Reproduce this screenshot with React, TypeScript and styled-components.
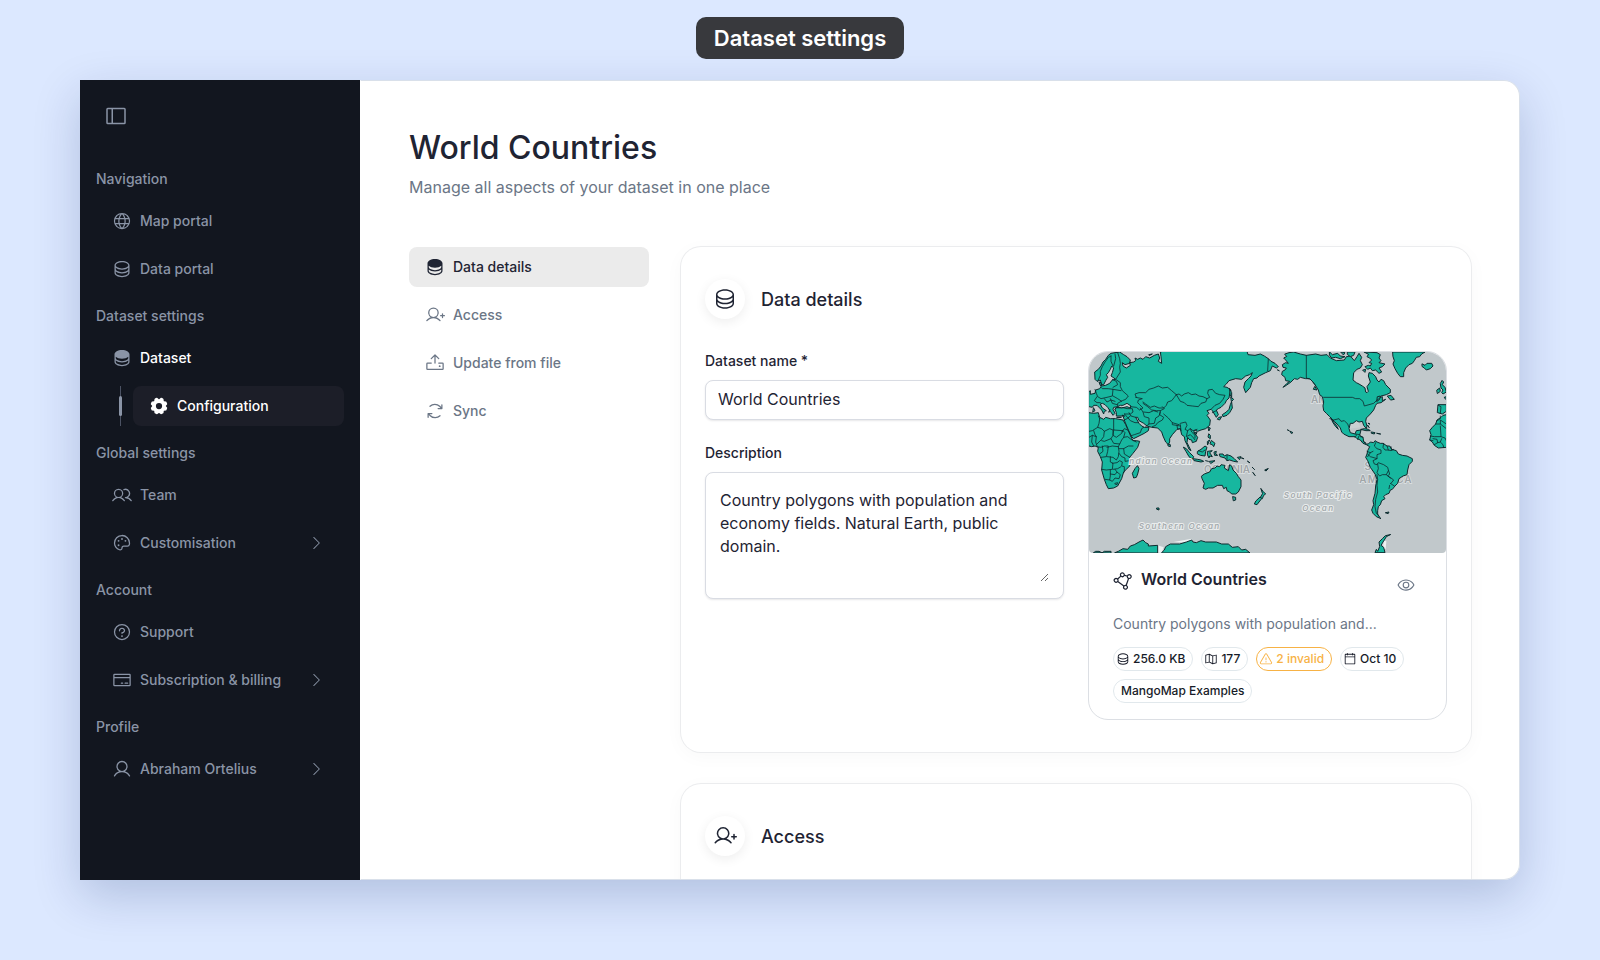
import React from 'react';
import styled, { createGlobalStyle, css } from 'styled-components';
import type { IconType } from 'react-icons';
import {
  PiSidebarSimple, PiGlobe, PiDatabase, PiDatabaseFill, PiGearFill, PiUsers,
  PiPalette, PiQuestion, PiCreditCard, PiUser, PiCaretRightLight,
  PiUserPlus, PiUpload, PiArrowsClockwise, PiPolygon, PiEye,
  PiMapTrifold, PiWarning, PiCalendarBlank,
} from 'react-icons/pi';

const GlobalStyle = createGlobalStyle`
  * { box-sizing: border-box; }
  body { margin: 0; background: #dce8ff; font-family: Inter, "Liberation Sans", sans-serif; color: #1f2433; }
  button, input, textarea { font: inherit; color: inherit; }
  h1, h2, h3, p, ul { margin: 0; padding: 0; }
`;

const Page = styled.div`
  min-height: 100vh;
  display: flex;
  flex-direction: column;
  align-items: center;
  padding: 17px 80px 80px;
`;
const Caption = styled.div`
  padding: 7px 18px;
  border-radius: 10px;
  background: #38393d;
  color: #fff;
  font-size: 22px;
  line-height: 28px;
  font-weight: 600;
`;
const Window = styled.div`
  display: flex;
  align-self: stretch;
  height: calc(100vh - 160px);
  margin-top: 21px;
  border-radius: 0 16px 16px 0;
  box-shadow: 0 16px 48px rgba(0, 32, 96, 0.2);
`;
const Sidebar = styled.nav`
  flex: 0 0 280px;
  padding: 16px;
  background: #12161f;
  color: #8a94a6;
  font-size: 14px;
  line-height: 20px;
  font-weight: 500;
`;
const Toggle = styled.button`
  display: flex;
  padding: 8px;
  margin-bottom: 33px;
  border: 0;
  background: none;
  color: #8a94a6;
  cursor: pointer;
  svg { width: 24px; height: 24px; }
`;
const Group = styled.section`
  & + & { margin-top: 17px; }
`;
const GroupTitle = styled.h2`
  font: inherit;
  margin-bottom: 12px;
`;
const Rows = styled.ul`
  display: flex;
  flex-direction: column;
  gap: 8px;
  list-style: none;
`;
const Branch = styled.li`
  display: flex;
  align-items: center;
  padding-left: 23px;
`;
const Rail = styled.span`
  flex: 0 0 3px;
  display: flex;
  align-items: center;
  height: 40px;
  margin-right: 11px;
  background: linear-gradient(#4b5263, #4b5263) center / 1px 100% no-repeat;
  &::before { content: ''; width: 3px; height: 20px; border-radius: 2px; background: #8a94a6; }
`;
const RowLink = styled.a<{ $tone?: 'open' | 'active' | 'selected' }>`
  flex: 1;
  display: flex;
  align-items: center;
  gap: 8px;
  height: 40px;
  padding: 0 19px 0 16px;
  border-radius: 8px;
  color: inherit;
  text-decoration: none;
  font-size: 14px;
  line-height: 20px;
  font-weight: 500;
  svg { width: 20px; height: 20px; flex: none; }
  svg:nth-of-type(2) { width: 18px; height: 18px; margin-left: auto; }
  ${p => p.$tone === 'open' && css`span { color: #fff; }`}
  ${p => p.$tone === 'active' && css`background: #1c1e28; color: #fff;`}
  ${p => p.$tone === 'selected' && css`background: #ebebeb; color: #1f2433;`}
`;
const Main = styled.main`
  flex: 1;
  min-width: 0;
  overflow: hidden;
  padding: 48px 48px 0;
  border: 1px solid #d9e0ea;
  border-left-color: #fff;
  border-radius: 0 16px 16px 0;
  background: #fff;
`;
const Title = styled.h1`
  font-size: 32px;
  line-height: 38px;
  font-weight: 500;
`;
const Subtitle = styled.p`
  margin-top: 8px;
  font-size: 16px;
  line-height: 24px;
  color: #6b7686;
`;
const Columns = styled.div`
  display: grid;
  grid-template-columns: 240px minmax(0, 1fr);
  gap: 32px;
  margin-top: 48px;
`;
const SectionNav = styled.nav`
  color: #6b7686;
`;
const Cards = styled.div`
  display: flex;
  flex-direction: column;
  gap: 32px;
`;
const Card = styled.section`
  padding: 32px 24px;
  border-radius: 20px;
  background: #fff;
  box-shadow: 0 0 0 1px #ebecee, 0 4px 20px rgba(0, 0, 0, 0.03);
`;
const CardHead = styled.header`
  display: flex;
  align-items: center;
  gap: 16px;
  margin-bottom: 32px;
  h2 { padding-top: 2px; font-size: 18px; line-height: 28px; font-weight: 500; }
`;
const RoundIcon = styled.span`
  display: flex;
  align-items: center;
  justify-content: center;
  width: 40px;
  height: 40px;
  border-radius: 50%;
  background: #fff;
  box-shadow: 0 3px 12px rgba(0, 0, 0, 0.07);
  svg { width: 24px; height: 24px; }
`;
const Split = styled.div`
  display: grid;
  grid-template-columns: 1fr 1fr;
  gap: 24px;
`;
const Form = styled.form`
  display: flex;
  flex-direction: column;
  gap: 23px;
`;
const Field = styled.div`
  display: flex;
  flex-direction: column;
  gap: 9px;
  label { font-size: 14px; line-height: 20px; font-weight: 500; }
`;
const boxed = css`
  border: 1px solid #d9dce3;
  border-radius: 8px;
  background: #fff;
  box-shadow: 0 1px 2px rgba(16, 24, 40, 0.1);
`;
const TextInput = styled.input`
  ${boxed}
  height: 40px;
  padding: 0 12px 2px;
  font-size: 16px;
`;
const AreaBox = styled.div`
  ${boxed}
  display: flex;
  padding: 16px 14px;
  textarea {
    flex: 1;
    height: 93px;
    padding: 0;
    border: 0;
    outline: 0;
    background: none;
    font-size: 16px;
    line-height: 23px;
    resize: vertical;
  }
`;
const Preview = styled.article`
  border: 1px solid #dcdfe4;
  border-radius: 20px;
  overflow: hidden;
`;
const MapBox = styled.div`
  overflow: hidden;
  border-radius: 0 0 4px 4px;
  background: #c1c8cb;
  svg { display: block; width: 100%; }
`;
const PreviewBody = styled.div`
  padding: 12px 24px 16px;
`;
const PreviewHead = styled.div`
  display: flex;
  align-items: center;
  gap: 8px;
  height: 40px;
  h3 { flex: 1; padding-bottom: 12px; font-size: 16px; line-height: 16px; font-weight: 600; }
  > svg { width: 20px; height: 20px; margin-bottom: 8px; }
`;
const EyeButton = styled.button`
  display: flex;
  padding: 0;
  margin-right: 7px;
  border: 0;
  background: none;
  color: #6b7686;
  cursor: pointer;
  svg { width: 18px; height: 18px; }
`;
const Summary = styled.p`
  margin: 8px 0 12px;
  font-size: 14px;
  line-height: 22px;
  color: #6b7686;
  white-space: nowrap;
  overflow: hidden;
  text-overflow: ellipsis;
`;
const Tags = styled.ul`
  display: flex;
  flex-wrap: wrap;
  gap: 8px;
  list-style: none;
`;
const Tag = styled.li<{ $warn?: boolean; $plain?: boolean }>`
  display: flex;
  align-items: center;
  gap: 3px;
  height: 24px;
  padding: 0 7px 0 ${p => (p.$plain ? 7 : 2)}px;
  border: 1px solid ${p => (p.$warn ? '#f7b245' : '#e1e8ec')};
  border-radius: 12px;
  color: ${p => (p.$warn ? '#f7b245' : '#171b28')};
  font-size: 12px;
  line-height: 22px;
  font-weight: 500;
  white-space: nowrap;
  svg { width: 14px; height: 14px; }
`;

/* Country shapes, grouped by hemisphere. */
const eastLand = [
  // Eurasia
  'M26 155L30 152L30 163L44 160L46 150L58 146L62 140L58 132L56 126L62 128L64 138L76 136L88 130L96 120L106 118L98 112L92 108L96 98L100 84L94 78L90 88L84 98L78 104L82 112L76 122L70 134L64 134L60 120L50 124L44 118L43 96L54 88L62 78L68 66L76 58L84 46L92 40L104 38L118 36L130 44L140 50L150 60L148 70L134 74L126 68L128 78L138 84L150 76L148 68L160 66L166 62L164 54L172 58L180 54L188 58L196 50L208 54L222 46L234 42L238 54L234 64L244 70L242 50L240 36L248 34L250 34L500 34L503 44L524 46L540 42L552 48L564 56L572 64L584 70L594 80L588 84L576 78L570 92L556 98L548 102L536 108L530 114L520 116L514 128L510 142L496 158L490 142L494 126L504 116L512 108L516 98L508 104L496 108L484 118L466 116L446 122L438 132L430 140L440 142L452 150L448 162L446 174L438 182L434 190L422 202L414 206L408 210L414 224L408 232L402 222L396 212L392 208L380 212L386 220L380 226L390 240L388 256L376 266L362 270L352 274L344 270L340 276L352 292L348 304L336 308L334 300L326 298L322 292L320 308L326 320L332 332L326 328L320 314L314 302L312 290L304 284L300 266L290 268L276 284L268 296L268 306L264 314L256 306L248 288L244 276L238 270L232 264L214 262L200 258L190 250L176 242L172 232L166 232L176 250L184 258L192 262L206 262L204 272L192 280L176 288L160 296L154 290L144 270L134 246L130 234L128 228L108 228L108 218L104 208L108 202L124 204L140 200L150 204L152 198L140 190L128 196L120 196L112 200L100 202L98 208L104 220L98 226L90 214L82 202L74 194L66 190L60 192L66 204L78 212L72 214L70 222L64 210L56 202L50 196L40 196L36 202L26 200Z',
  // Africa
  'M26 218L40 220L54 218L58 232L70 238L76 232L90 236L106 236L128 240L136 254L142 268L150 286L158 302L168 302L178 304L172 322L158 340L148 352L150 368L148 378L138 388L130 396L124 416L112 438L100 444L84 446L78 434L72 418L64 390L66 366L60 350L52 334L54 322L44 318L34 320L26 318Z',
  'M172 378L176 386L172 402L168 412L160 414L156 400L164 386Z',
  // Australia and New Zealand
  'M364 408L372 402L388 396L394 386L404 384L410 378L418 380L422 374L434 376L432 384L444 392L448 374L454 378L458 390L468 400L474 410L482 420L482 440L474 456L466 462L454 462L448 456L440 452L438 442L430 446L426 436L412 436L398 444L384 444L376 448L368 444L372 430L366 418Z',
  'M458 470L466 472L466 480L460 482Z', 'M542 446L548 454L556 462L550 466L546 476L540 472L546 462Z', 'M540 472L544 476L536 486L530 494L522 492L526 484Z',
  // Islands
  'M310 322L318 326L328 338L340 350L336 358L326 350L318 336Z', 'M338 356L352 358L362 360L370 364L362 366L342 362Z', 'M352 334L362 328L374 318L380 322L376 334L374 348L360 346L352 342Z',
  'M382 334L396 332L388 338L396 350L388 348L386 354L382 346Z', 'M418 342L428 342L432 348L440 344L452 348L462 356L472 366L460 364L448 360L440 362L434 354L420 350Z',
  'M386 282L390 286L390 296L384 292Z', 'M394 302L404 310L400 320L396 314L390 312Z', 'M382 304L388 300L382 314Z', 'M448 146L454 158L454 172L450 166Z',
  'M452 172L460 178L454 184Z', 'M454 186L456 204L448 218L440 226L428 230L426 224L438 216L446 208L450 194Z', 'M416 232L424 230L418 240L412 238Z',
  'M264 312L270 314L270 320L264 318Z', 'M230 504L236 504L236 510L230 508Z', 'M376 362L384 364M388 364L404 362L392 370Z', 'M402 336L408 334L406 342L412 346L404 346Z', 'M556 390L564 386L558 392Z',
  'M472 352L482 350L478 358Z', 'M484 354L490 356Z', 'M502 364L508 368Z', 'M516 382L522 388Z', 'M518 398L524 406Z', 'M384 262L390 264L386 272Z', 'M342 278L350 276L348 282Z',
  'M206 44L216 42L208 46Z', 'M88 210L86 216Z', 'M110 232L122 232Z', 'M40 204L44 212L38 216Z', 'M126 226L132 228Z',
  // Antarctica
  'M40 638L46 634L56 634L64 638Z', 'M66 638L72 634L92 634L92 638Z', 'M104 638L114 634L128 626L142 628L150 618L162 614L176 606L188 600L196 608L204 612L204 618L232 616L232 638Z',
  'M244 638L252 630L256 620L270 612L298 612L318 606L334 600L338 606L348 608L362 602L376 606L408 606L424 612L444 612L456 622L474 620L484 630L496 628L508 638Z',
];
const westLand = [
  // North America
  'M74 42L86 38L100 36L120 42L138 46L166 42L182 46L200 44L210 54L228 62L252 60L258 50L270 48L282 62L290 50L296 40L304 52L300 62L306 74L300 84L290 88L280 98L278 120L288 128L296 132L306 138L314 144L316 156L320 158L324 154L320 140L330 126L324 108L326 98L336 100L346 110L350 120L356 126L362 118L370 122L376 134L390 148L390 158L378 164L362 168L356 174L366 170L366 182L376 178L362 188L350 190L346 196L340 210L330 222L318 234L316 244L320 258L318 266L310 256L306 244L296 246L288 242L278 250L270 250L266 266L270 278L284 282L288 272L302 270L298 286L308 292L310 304L316 312L324 312L330 306L340 308L344 302L350 306L360 310L368 310L380 318L388 318L394 328L408 332L414 342L426 346L440 348L456 356L456 364L446 374L442 390L440 404L428 408L416 416L412 430L404 438L396 448L390 450L386 460L376 464L370 470L374 476L364 482L360 494L354 500L352 512L352 522L358 532L362 536L348 530L338 520L334 510L340 494L338 482L344 460L346 438L350 418L344 402L330 382L322 362L316 352L320 342L322 332L328 320L318 314L308 310L300 300L290 296L284 290L266 290L250 282L244 276L240 264L230 252L222 244L214 236L208 230L198 220L190 212L188 198L190 186L186 170L178 164L174 150L164 134L156 124L148 116L136 116L120 112L112 118L102 116L92 126L78 136L68 142L80 130L88 124L76 122L74 112L64 104L66 94L74 90L78 84L68 82L66 74L76 68L84 70L76 60L70 54L78 50Z',
  'M212 234L220 246L228 256L234 268L226 260L218 248Z',
  'M302 268L312 266L324 268L330 272L318 272Z', 'M334 276L344 278L342 282L334 280Z', 'M350 280L360 282Z', 'M322 256L326 262Z', 'M324 250L328 252Z', 'M382 168L392 166L402 178L392 180Z',
  'M208 36L216 44L232 40L240 48L254 50L240 56L226 52L214 54L208 46Z', 'M242 36L254 38L250 44Z', 'M262 36L284 36L280 46L270 50L262 44Z',
  'M312 36L350 38L360 44L356 54L362 62L356 68L374 72L366 80L356 84L364 96L356 100L346 90L336 92L330 84L322 88L314 80L324 76L330 78L334 70L326 68L334 60L328 54L320 50L324 44Z',
  'M308 90L316 88L314 96Z', 'M352 170L360 168L358 178L350 184Z',
  // Greenland and Iceland
  'M398 36L494 36L484 42L478 50L468 52L462 62L456 70L446 74L436 84L430 98L430 110L420 110L412 100L404 86L398 72L402 62L398 50Z', 'M486 72L494 76L500 70L514 70L518 78L510 86L498 90L492 84L486 80Z',
  // Western Europe and Africa
  'M546 122L550 126L546 134L554 142L558 156L548 162L544 158L548 150L542 144L540 132Z', 'M530 150L538 144L540 154L532 160Z', 'M534 194L558 194L558 214L546 222L532 218Z', 'M552 172L558 170L558 178Z',
  'M558 224L548 226L542 232L530 240L526 252L516 262L508 272L512 284L508 300L516 306L522 316L534 324L558 322Z',
  // Antarctic Peninsula and small islands
  'M390 584L378 590L372 600L368 606L362 616L370 622L374 638L344 638L348 628L352 634L358 620L356 606L366 596L374 588Z',
  'M376 518L386 516L384 520Z', 'M82 270L86 272Z', 'M90 274L98 278L94 280Z', 'M14 390L22 386L18 392Z', 'M52 90L56 92Z', 'M160 148L170 150L164 140Z',
];
const eastBorders =
  'M112 38L118 56L120 70L118 82L120 96L106 118L120 128L120 140L126 152L144 168L136 178L126 182L112 190L112 202 M52 124L60 106L60 94L66 80L74 66L84 52L92 48 M104 42L106 56L100 78 M92 48L92 64L98 78 M44 148L48 160L52 170L62 176L80 172L96 168L98 148L84 146L66 146L62 142 M98 148L110 150L122 152 M98 168L112 176L124 184 M72 176L80 186L92 180L104 184 M50 170L42 182L50 188L60 188 M90 176L96 190L110 194 M96 118L108 124L112 134L98 142 ' +
  'M104 208L106 204L124 202L140 206L156 206L158 216L150 222L132 222 M150 200L168 202L178 210L188 204L178 194L172 188L174 180L186 176L166 172 M168 172L164 162L176 158L196 158L206 148L220 144L234 138L246 144L262 142L274 152L288 164L282 172L274 182L262 186L258 196L250 204L236 204L222 198L210 202L196 192L188 186 M288 164L296 162L304 168L312 162L324 158L334 164L346 162L356 168L368 170L380 176L376 186L362 190L354 200L336 198L320 196L312 188L300 184L294 174L288 164 M380 176L388 172L382 160L384 150L396 148L406 160L418 164L434 166L428 178L418 190L404 196L392 208 M396 218L408 212 ' +
  'M188 190L202 200L214 210L228 212L240 212L252 206L246 200 M180 204L188 216L192 230L206 234L206 252L196 260 M190 216L206 218L220 212L232 216 M240 212L238 224L250 232L246 240L232 248L226 256L216 260 M206 252L222 250L226 234L236 228L240 216 M250 222L264 234L276 248L296 254L300 250L316 246L320 256L314 268L322 272L330 266L338 272L350 268 M276 248L276 254L300 258 M290 256L292 268L300 266 M300 254L302 272 M322 272L318 290L330 284L338 292L344 300 M330 266L334 276L344 286L344 294 M132 222L140 230L150 242L164 248L174 248 M146 218L152 228L166 232 M132 240L140 236L150 228 M150 288L162 284L180 278L184 266L190 262 ' +
  'M58 236L56 250L52 262L36 272L26 274 M58 236L54 228 M100 236L100 270L128 272 M52 262L64 266L72 274L70 290L64 298L50 312 M72 274L88 266L98 270L98 286L92 296L72 304L64 302 M100 270L98 286L108 292L124 280L128 272L134 278L130 292L124 300L118 312L100 310L92 296 M130 292L142 290L152 298L168 306 M50 320L62 322L72 318L84 318L82 334L78 350L62 352 M66 318L68 334L58 342 M80 322L96 318L114 320L116 334L114 350L108 360L98 352L80 350 M114 320L118 312 M116 326L130 326L144 318L158 318 M130 326L132 342L148 352 M116 340L124 350L134 354L134 364L148 362 M90 350L90 366L98 370L96 388L78 390L64 388 M96 370L110 368L118 362L126 366L124 378L132 380L132 396 M98 388L112 386L122 380 M90 390L90 408L88 420L74 418 M90 402L104 404L110 396L120 404L116 416L104 414L96 424L88 420 M110 396L104 388 M104 430L112 428L110 434L104 432 M26 292L36 286L48 290L46 306L50 318 M36 286L34 306L40 318 M124 276L132 266L142 270 M40 272L44 284L48 290 M354 332L366 336L374 330 M440 346L440 362 M564 56L562 92';
const westBorders =
  'M138 46L138 114L150 118L158 126L166 138 M190 172L276 172L286 176L298 176L308 184L312 198L326 194L340 190L350 180L356 176 M208 236L220 240L236 236L242 244L252 242L262 252L266 262 M284 292L288 286L286 282L298 284 M296 288L292 298 M300 290L308 292 M308 304L316 308 M346 308L342 318L350 326L362 330L362 340L350 344L350 356L344 354L330 350L322 342 M320 334L330 338L322 350 M330 338L338 334 M350 356L338 362L342 372L350 374L354 368L370 374L382 382L384 390L388 402L382 408L392 414L400 420L392 430 M370 310L368 322L374 330L384 330L392 332L400 328 M380 318L384 330 M392 320L394 330 M352 372L354 386L350 398L358 408L366 404L378 404L384 392 M378 404L390 414 M350 404L352 418L350 436L352 456L346 478L344 500L348 520L356 528 M388 436L386 446 M390 430L402 438 ' +
  'M540 228L540 236L528 244 M526 252L540 252L540 240L558 252 M540 258L542 290L522 290L510 288 M540 252L558 266 M542 290L554 294L558 302 M522 314L532 308L530 298L518 296 M532 308L540 306L548 314L550 322 M540 306L544 296 M508 300L518 302 M534 196L542 200L540 220';

const WorldMap = () => (
  <svg viewBox="26 36 1071 603" role="img" aria-label="World map" fontFamily='Inter, "Liberation Sans", sans-serif' textAnchor="middle">
    <g fill="#eef1f2">
      <path d="M232 616L250 622L244 638L230 638Z M280 606L334 596L330 608Z M910 600L918 604L916 626L908 630Z" />
      <path d="M88 80L84 110L98 128L104 100Z M112 188L148 192L150 204L120 200Z M174 180L186 186L186 216L174 210Z M822 98L818 128L854 140L866 130L864 100L846 92Z M810 244L806 266L840 262L834 244Z" opacity=".2" />
    </g>
    <g fill="#9fa5a8" stroke="#dfe3e4" strokeWidth="4" paintOrder="stroke" fontSize="30" fontWeight="600">
      <text x="440" y="400">OCEANIA</text>
      <text x="692" y="188" textAnchor="start">AMERICA</text>
      <text x="906" y="390">SOUTH</text>
      <text x="917" y="429" letterSpacing="3">AMERICA</text>
    </g>
    <g fill="#17b79f" stroke="#0f2a2e" strokeWidth="3" strokeLinejoin="round" strokeLinecap="round">
      {eastLand.map(d => <path key={d} d={d} />)}
      <path d={eastBorders} fill="none" strokeWidth="2.4" />
      <g transform="translate(540 0)">
        {westLand.map(d => <path key={d} d={d} />)}
        <path d={westBorders} fill="none" strokeWidth="2.4" />
      </g>
    </g>
    <g fontStyle="italic" fontWeight="600" fontSize="24" letterSpacing="4" fill="#a5abae" stroke="#e9ecec" strokeWidth="6" paintOrder="stroke">
      <text x="243" y="373">ndian Ocean</text>
      <text x="298" y="568">Southern Ocean</text>
      <text x="714" y="475">South Pacific</text>
      <text x="714" y="514">Ocean</text>
    </g>
  </svg>
);

type Item = { icon: IconType; label: string; tone?: 'open' | 'active' | 'selected'; more?: boolean; child?: boolean };
const groups: { title: string; items: Item[] }[] = [
  { title: 'Navigation', items: [{ icon: PiGlobe, label: 'Map portal' }, { icon: PiDatabase, label: 'Data portal' }] },
  { title: 'Dataset settings', items: [{ icon: PiDatabaseFill, label: 'Dataset', tone: 'open' }, { icon: PiGearFill, label: 'Configuration', tone: 'active', child: true }] },
  { title: 'Global settings', items: [{ icon: PiUsers, label: 'Team' }, { icon: PiPalette, label: 'Customisation', more: true }] },
  { title: 'Account', items: [{ icon: PiQuestion, label: 'Support' }, { icon: PiCreditCard, label: 'Subscription & billing', more: true }] },
  { title: 'Profile', items: [{ icon: PiUser, label: 'Abraham Ortelius', more: true }] },
];
const sections: Item[] = [
  { icon: PiDatabaseFill, label: 'Data details', tone: 'selected' },
  { icon: PiUserPlus, label: 'Access' },
  { icon: PiUpload, label: 'Update from file' },
  { icon: PiArrowsClockwise, label: 'Sync' },
];

const Row = ({ icon: Icon, label, tone, more, child }: Item) => {
  const link = (
    <RowLink href="#" $tone={tone}>
      <Icon aria-hidden />
      <span>{label}</span>
      {more && <PiCaretRightLight aria-hidden />}
    </RowLink>
  );
  return child ? <Branch><Rail />{link}</Branch> : <li>{link}</li>;
};

export default function App() {
  return (
    <Page>
      <GlobalStyle />
      <Caption>Dataset settings</Caption>
      <Window>
        <Sidebar>
          <Toggle type="button" aria-label="Toggle sidebar"><PiSidebarSimple /></Toggle>
          {groups.map(group => (
            <Group key={group.title}>
              <GroupTitle>{group.title}</GroupTitle>
              <Rows>{group.items.map(item => <Row key={item.label} {...item} />)}</Rows>
            </Group>
          ))}
        </Sidebar>
        <Main>
          <Title>World Countries</Title>
          <Subtitle>Manage all aspects of your dataset in one place</Subtitle>
          <Columns>
            <SectionNav>
              <Rows>{sections.map(item => <Row key={item.label} {...item} />)}</Rows>
            </SectionNav>
            <Cards>
              <Card>
                <CardHead>
                  <RoundIcon><PiDatabase /></RoundIcon>
                  <h2>Data details</h2>
                </CardHead>
                <Split>
                  <Form>
                    <Field>
                      <label htmlFor="name">Dataset name *</label>
                      <TextInput id="name" defaultValue="World Countries" />
                    </Field>
                    <Field>
                      <label htmlFor="description">Description</label>
                      <AreaBox>
                        <textarea id="description" defaultValue="Country polygons with population and economy fields. Natural Earth, public domain." />
                      </AreaBox>
                    </Field>
                  </Form>
                  <Preview>
                    <MapBox><WorldMap /></MapBox>
                    <PreviewBody>
                      <PreviewHead>
                        <PiPolygon />
                        <h3>World Countries</h3>
                        <EyeButton type="button" aria-label="Preview dataset"><PiEye /></EyeButton>
                      </PreviewHead>
                      <Summary>Country polygons with population and...</Summary>
                      <Tags>
                        <Tag><PiDatabase />256.0 KB</Tag>
                        <Tag><PiMapTrifold />177</Tag>
                        <Tag $warn><PiWarning />2 invalid</Tag>
                        <Tag><PiCalendarBlank />Oct 10</Tag>
                        <Tag $plain>MangoMap Examples</Tag>
                      </Tags>
                    </PreviewBody>
                  </Preview>
                </Split>
              </Card>
              <Card>
                <CardHead>
                  <RoundIcon><PiUserPlus /></RoundIcon>
                  <h2>Access</h2>
                </CardHead>
              </Card>
            </Cards>
          </Columns>
        </Main>
      </Window>
    </Page>
  );
}
